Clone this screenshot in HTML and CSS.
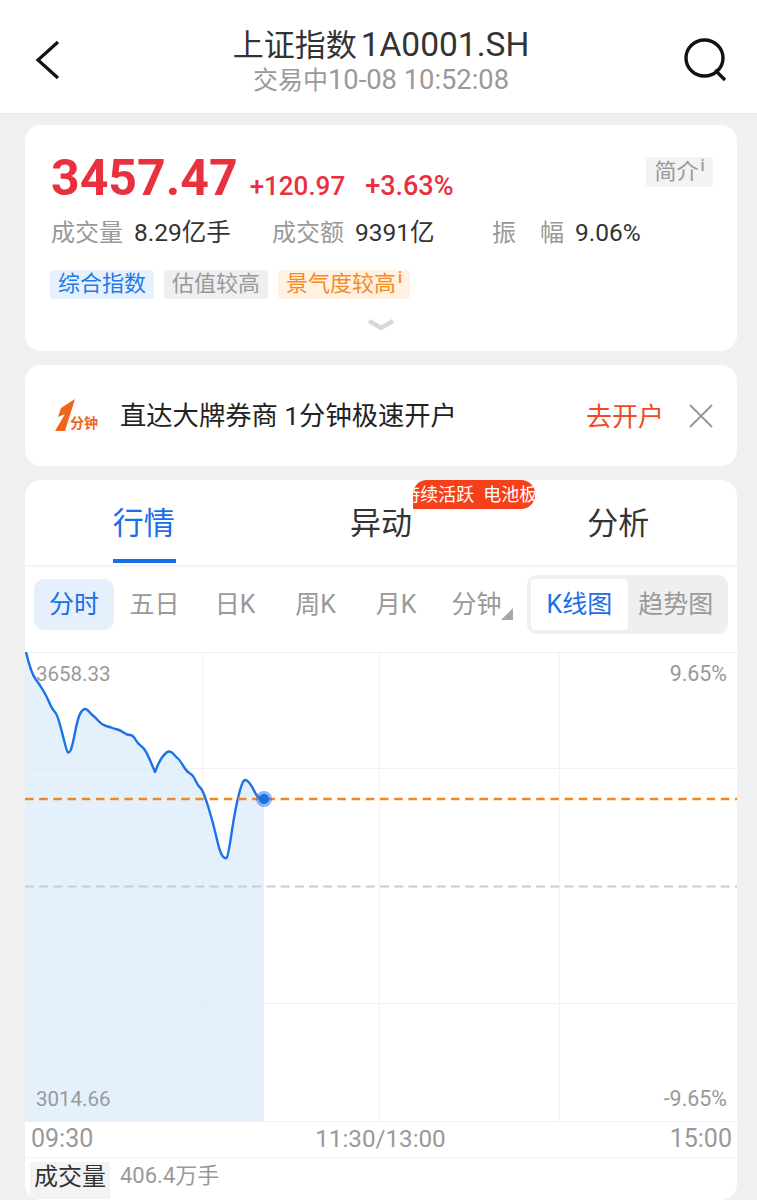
FILE: index.html
```html
<!DOCTYPE html>
<html lang="zh-CN">
<head>
  <meta charset="UTF-8">
  <title>上证指数 1A0001.SH</title>
  <link rel="stylesheet" href="styles.css">
</head>
<body>
  <header class="topbar">
    <svg class="back-icon" width="26" height="40" viewBox="0 0 26 40"><path d="M23 2 L3 20 L23 38" fill="none" stroke="#111" stroke-width="3.2"/></svg>
    <div class="title-box">
      <div class="title">上证指数<span class="title-code">1A0001.SH</span></div>
      <div class="subtitle">交易中<span class="subtitle-time">10-08 10:52:08</span></div>
    </div>
    <svg class="search-icon" width="44" height="44" viewBox="0 0 44 44"><ellipse cx="20.5" cy="20" rx="18.5" ry="18" fill="none" stroke="#111" stroke-width="3.4"/><path d="M31 32 L41 42" stroke="#111" stroke-width="3.4" fill="none"/></svg>
  </header>

  <main class="content">
    <section class="card quote">
      <div class="price-row">
        <span class="price">3457.47</span>
        <span class="change">+120.97</span>
        <span class="change pct">+3.63%</span>
        <span class="intro">简介<sup>i</sup></span>
      </div>
      <div class="stats">
        <span class="stat stat-vol"><em>成交量</em>8.29亿手</span>
        <span class="stat stat-amt"><em>成交额</em>9391亿</span>
        <span class="stat"><em class="spaced"><i>振</i><i>幅</i></em>9.06%</span>
      </div>
      <div class="tags">
        <span class="tag tag-blue">综合指数</span>
        <span class="tag tag-gray">估值较高</span>
        <span class="tag tag-orange">景气度较高<sup>i</sup></span>
      </div>
      <svg class="chevron" width="28" height="14" viewBox="0 0 28 14"><path d="M2 3 L14 10 L26 3" fill="none" stroke="#d8d8d8" stroke-width="4.5"/></svg>
    </section>

    <section class="card promo">
      <svg class="promo-logo" width="46" height="46" viewBox="0 0 46 46">
        <polygon points="22,6 8,15 5,24 12,21 2,38 12,38" fill="#f0641e"/>
        <text x="17" y="35" class="logo-text">分钟</text>
      </svg>
      <span class="promo-text">直达大牌券商 1分钟极速开户</span>
      <span class="promo-link">去开户</span>
      <svg class="promo-close" width="24" height="24" viewBox="0 0 24 24"><path d="M1 1 L23 23 M23 1 L1 23" stroke="#9a9a9a" stroke-width="2" fill="none"/></svg>
    </section>

    <section class="card market">
      <nav class="tabs">
        <div class="tab active">行情</div>
        <div class="tab">异动<span class="badge"><span class="badge-text">持续活跃&nbsp;&nbsp;电池板</span></span></div>
        <div class="tab">分析</div>
      </nav>

      <div class="periods">
        <span class="period active">分时</span>
        <span class="period">五日</span>
        <span class="period">日K</span>
        <span class="period">周K</span>
        <span class="period">月K</span>
        <span class="period minutes">分钟</span>
        <div class="switch">
          <span class="switch-item on">K线图</span>
          <span class="switch-item">趋势图</span>
        </div>
      </div>

      <div class="chart">
        <svg width="712" height="470" viewBox="0 0 712 470">
          <path class="grid" d="M0 .5H712 M0 116.5H712 M0 351.5H712 M0 469.5H712 M177.5 0V470 M354.5 0V470 M534.5 0V470"/>
          <path d="M1 0 Q6 21 10.5 27 Q15 33 18.5 39 Q22 45 24.5 51 Q27 57 29.5 59.5 Q32 62 34.5 71 Q37 80 39.5 90 Q42 100 43 100.5 Q44 101 45.5 98.5 Q47 96 50 80.5 Q53 65 55.5 61 Q58 57 60 57 Q62 57 64 59.5 Q66 62 68 63.5 Q70 65 73.5 69 Q77 73 81 74 Q85 75 87.5 76 Q90 77 92.5 77.5 Q95 78 98.5 80.5 Q102 83 105 83 Q108 83 110.5 87.5 Q113 92 115.5 93.5 Q118 95 120.5 99 Q123 103 130 120 Q135 106 141.5 100.5 Q145 98 148.5 102 Q152 106 153 106.5 Q154 107 158 113.5 Q162 120 165 121.5 Q168 123 170.5 128.5 Q173 134 175.5 136 Q178 138 183 154 Q188 170 191.5 185.5 Q195 201 197.5 204 Q200 207 201.5 206 Q203 205 206.5 181.5 Q210 158 213.5 144 Q217 130 219 128.5 Q221 127 224 130.5 Q227 134 230 140.5 Q233 147 239 147 L239 469 L0 469 L0 0 Z" fill="#e5f0fd"/>
          <path class="grid grid-on-fill" d="M177.5 138V470 M0 351.5H239 M0 116.5H130"/>
          <path d="M0 234.5H712" stroke="#cccccc" stroke-width="2" stroke-dasharray="9 5.2" fill="none"/>
          <path d="M1 0 Q6 21 10.5 27 Q15 33 18.5 39 Q22 45 24.5 51 Q27 57 29.5 59.5 Q32 62 34.5 71 Q37 80 39.5 90 Q42 100 43 100.5 Q44 101 45.5 98.5 Q47 96 50 80.5 Q53 65 55.5 61 Q58 57 60 57 Q62 57 64 59.5 Q66 62 68 63.5 Q70 65 73.5 69 Q77 73 81 74 Q85 75 87.5 76 Q90 77 92.5 77.5 Q95 78 98.5 80.5 Q102 83 105 83 Q108 83 110.5 87.5 Q113 92 115.5 93.5 Q118 95 120.5 99 Q123 103 130 120 Q135 106 141.5 100.5 Q145 98 148.5 102 Q152 106 153 106.5 Q154 107 158 113.5 Q162 120 165 121.5 Q168 123 170.5 128.5 Q173 134 175.5 136 Q178 138 183 154 Q188 170 191.5 185.5 Q195 201 197.5 204 Q200 207 201.5 206 Q203 205 206.5 181.5 Q210 158 213.5 144 Q217 130 219 128.5 Q221 127 224 130.5 Q227 134 230 140.5 Q233 147 239 147" fill="none" stroke="#1a73e8" stroke-width="2.4" stroke-linejoin="round"/>
          <path d="M0 147H712" stroke="#ee8a1d" stroke-width="2.4" stroke-dasharray="8.5 5.7" fill="none"/>
          <circle cx="239" cy="147" r="8" fill="#1a73e8" opacity=".5"/>
          <circle cx="239" cy="147" r="5" fill="#1a6ee8"/>
        </svg>
        <span class="axis-val top-left">3658.33</span>
        <span class="axis-val right-val top-right">9.65%</span>
        <span class="axis-val bottom-left">3014.66</span>
        <span class="axis-val right-val bottom-right">-9.65%</span>
      </div>

      <div class="times">
        <span>09:30</span>
        <span class="time-mid">11:30/13:00</span>
        <span>15:00</span>
      </div>

      <div class="volume">
        <span class="volume-label">成交量</span>
        <span class="volume-val">406.4万手</span>
      </div>
    </section>
  </main>
</body>
</html>
```

FILE: styles.css
```css
html, body {
  margin: 0;
  height: 1200px;
  overflow: hidden;
}
body {
  font-family: Roboto, "Noto Sans CJK SC", sans-serif;
  background-color: #f0f0f0;
  color: #333;
}
em, i {
  font-style: normal;
}
sup {
  font-size: 16px;
  font-weight: 500;
  line-height: 0;
  vertical-align: 8px;
  margin-left: 2px;
}

/* top bar */
.topbar {
  background: #fff;
  border-bottom: 1px solid #e6e6e6;
  box-sizing: border-box;
  height: 114px;
  display: flex;
  align-items: center;
  justify-content: space-between;
  padding: 0 29px 0 35px;
}
.back-icon {
  margin-top: 7px;
}
.search-icon {
  margin-top: 7px;
}
.title-box {
  text-align: center;
  margin-left: 17px;
  padding-top: 7px;
}
.title {
  font-size: 31px;
  line-height: 40px;
  color: #333;
}
.title-code {
  font-size: 33.5px;
  margin-left: 4px;
}
.subtitle {
  font-size: 25px;
  line-height: 28px;
  color: #999;
}
.subtitle-time {
  font-size: 27.3px;
}

/* cards */
.content {
  padding: 11px 20px 0 25px;
  display: flex;
  flex-direction: column;
  gap: 14px;
}
.card {
  background: #fff;
  border-radius: 16px;
}

/* quote card */
.quote {
  height: 226px;
  box-sizing: border-box;
  padding: 24px 24px 0 26px;
  position: relative;
}
.price-row {
  display: flex;
  align-items: baseline;
  height: 58px;
  position: relative;
}
.price {
  font-size: 50px;
  line-height: 58px;
  font-weight: 700;
  color: #e8303f;
  margin-right: 12px;
}
.change {
  font-size: 26px;
  font-weight: 500;
  color: #e8303f;
  margin-right: 20px;
}
.pct {
  font-size: 27px;
}
.intro {
  position: absolute;
  right: 0;
  top: 8px;
  width: 67px;
  height: 30px;
  line-height: 30px;
  text-align: center;
  background: #f3f3f3;
  border-radius: 4px;
  font-size: 22px;
  color: #999;
}
.stats {
  display: flex;
  margin-top: 8px;
  font-size: 24.5px;
  line-height: 36px;
  color: #333;
}
.stat em {
  font-size: 24px;
  color: #999;
  margin-right: 11px;
}
.stat-vol {
  width: 221px;
}
.stat-amt {
  width: 220px;
}
.spaced {
  display: inline-flex;
  width: 72px;
  justify-content: space-between;
}
.tags {
  display: flex;
  gap: 10px;
  margin-top: 19px;
  margin-left: -1px;
}
.tag {
  height: 29px;
  line-height: 28px;
  padding: 0 8px;
  font-size: 22px;
  border-radius: 4px;
}
.tag-blue {
  background: #e6f1fe;
  color: #1f7ae8;
}
.tag-gray {
  background: #efefef;
  color: #999;
}
.tag-orange {
  background: #fff2e3;
  color: #f58a1f;
}
.chevron {
  position: absolute;
  left: 342px;
  bottom: 19px;
}

/* promo card */
.promo {
  height: 101px;
  display: flex;
  align-items: center;
  padding: 0 24px 0 28px;
}
.promo-logo {
  margin-right: 21px;
}
.logo-text {
  font-size: 14px;
  font-weight: 700;
  fill: #f0641e;
}
.promo-text {
  font-size: 26.3px;
  color: #222;
  flex: 1;
  padding-bottom: 5px;
}
.promo-link {
  font-size: 26px;
  color: #f04a24;
  margin-right: 25px;
  padding-bottom: 3px;
}

/* market card */
.market {
  height: 720px;
  overflow: hidden;
}
.tabs {
  display: flex;
  border-bottom: 2px solid #f5f5f5;
  box-sizing: border-box;
  height: 87px;
}
.tab {
  flex: 1;
  text-align: center;
  font-size: 31px;
  line-height: 87px;
  color: #333;
  position: relative;
}
.tab.active {
  color: #1a6ee8;
}
.tab.active::after {
  content: "";
  position: absolute;
  left: 50%;
  bottom: 2px;
  width: 63px;
  height: 4px;
  margin-left: -31px;
  background: #1a6ee8;
}
.badge {
  position: absolute;
  left: 151px;
  top: 0;
  width: 122px;
  height: 29px;
  overflow: hidden;
  background: #f5401b;
  border-radius: 14px 14px 14px 0;
  color: #fff;
  font-size: 18px;
  line-height: 29px;
  white-space: nowrap;
}
.badge-text {
  display: block;
  margin-left: -11px;
}
.periods {
  display: flex;
  align-items: flex-start;
  box-sizing: border-box;
  height: 85px;
  padding: 12px 9px 0 9px;
}
.period {
  width: 80px;
  margin-right: .6px;
  height: 51px;
  line-height: 51px;
  text-align: center;
  font-size: 25px;
  color: #999;
  border-radius: 10px;
  position: relative;
}
.period.active {
  background: #e6f0fd;
  color: #1a6ee8;
}
.minutes::after {
  content: "";
  position: absolute;
  right: 4px;
  bottom: 10px;
  border-style: solid;
  border-width: 0 0 12px 12px;
  border-color: transparent transparent #a8a8a8 transparent;
}
.switch {
  margin: -4px 0 0 10px;
  width: 201px;
  height: 59px;
  box-sizing: border-box;
  padding: 4px;
  background: #efefef;
  border-radius: 10px;
  display: flex;
}
.switch-item {
  flex: 1;
  text-align: center;
  font-size: 25px;
  line-height: 51px;
  color: #999;
  border-radius: 4px;
}
.switch-item.on {
  background: #fff;
  color: #1a6ee8;
}

/* chart */
.chart {
  position: relative;
  height: 470px;
}
.chart svg {
  display: block;
}
.grid {
  stroke: #f2f2f2;
  stroke-width: 1;
  fill: none;
}
.grid-on-fill {
  stroke: #dfebfb;
}
.axis-val {
  position: absolute;
  font-size: 20.5px;
  line-height: 24px;
  color: #999;
}
.right-val {
  font-size: 21.4px;
}
.top-left {
  left: 11px;
  top: 10px;
}
.top-right {
  right: 10px;
  top: 10px;
}
.bottom-left {
  left: 11px;
  top: 435px;
}
.bottom-right {
  right: 10px;
  top: 435px;
}
.times {
  display: flex;
  justify-content: space-between;
  height: 35px;
  padding: 0 5px 0 6px;
  font-size: 25px;
  line-height: 34px;
  color: #999;
  border-bottom: 1px solid #f5f5f5;
}
.time-mid {
  font-size: 24.2px;
  margin-right: 2px;
}
.volume {
  display: flex;
  align-items: flex-start;
  padding: 4px 0 0 5px;
}
.volume-label {
  width: 80px;
  height: 37px;
  line-height: 30px;
  text-align: center;
  background: #f3f3f3;
  font-size: 24px;
  color: #333;
  margin-right: 10px;
}
.volume-val {
  font-size: 22px;
  line-height: 28px;
  color: #999;
}
```
